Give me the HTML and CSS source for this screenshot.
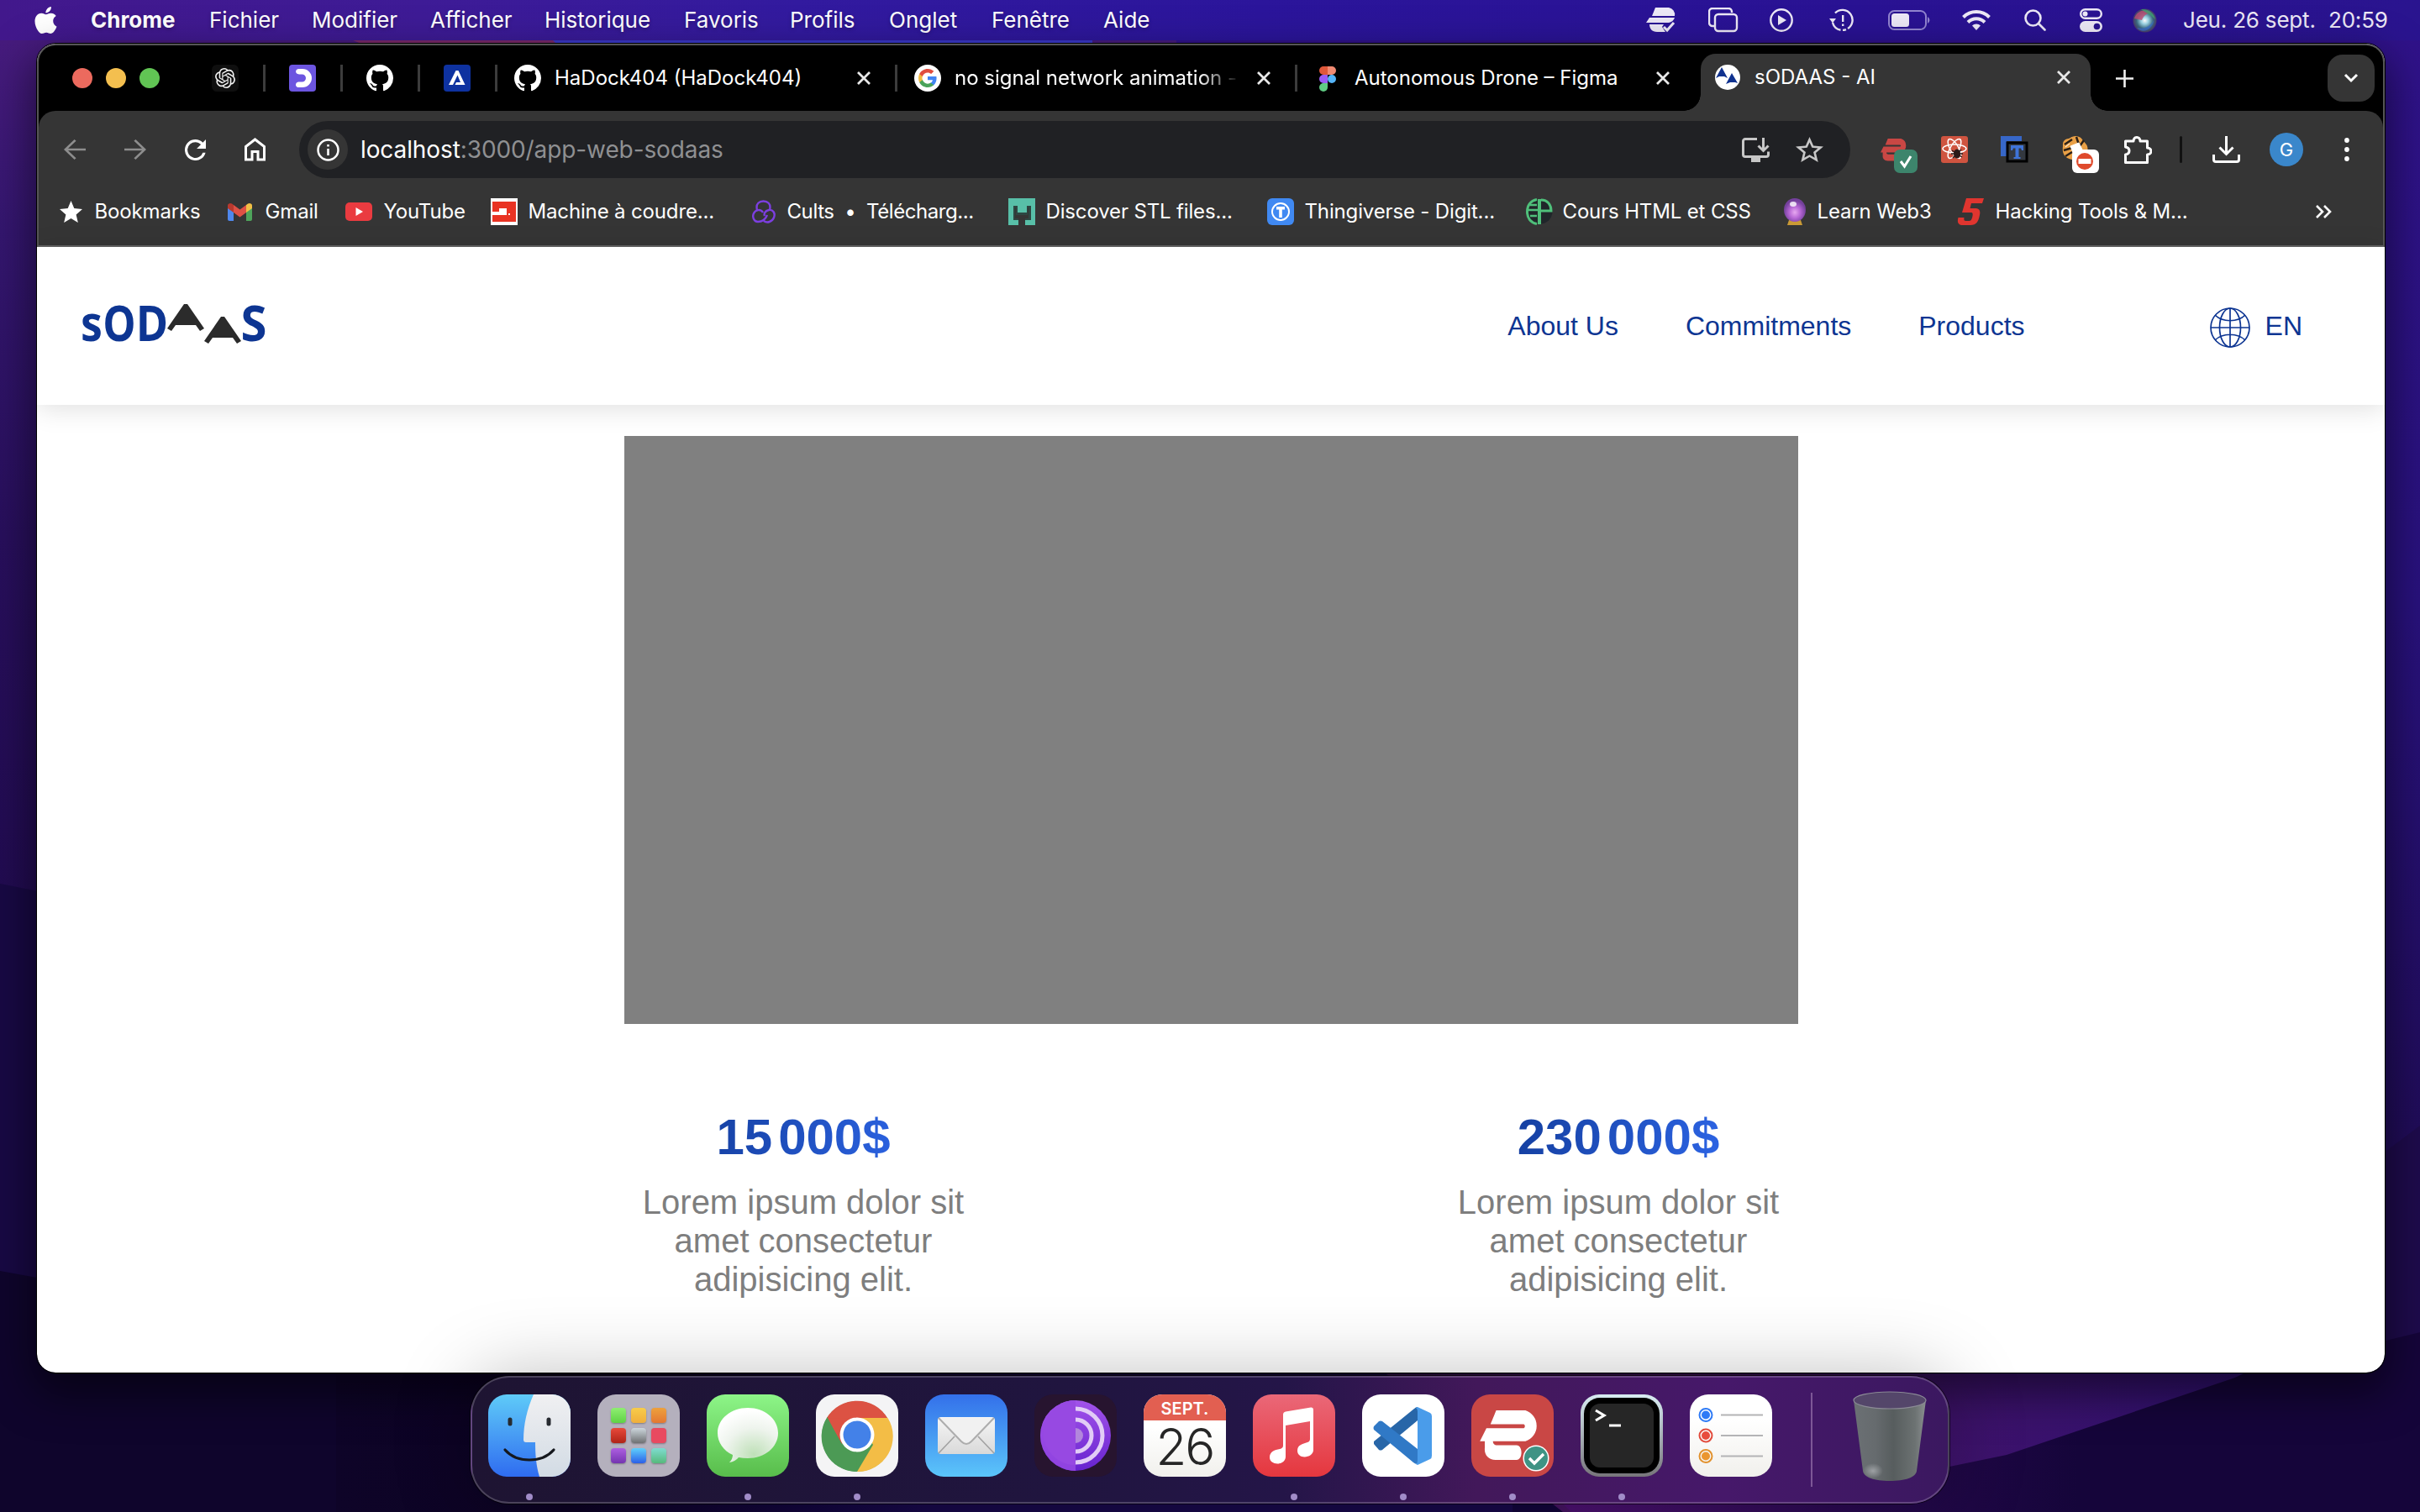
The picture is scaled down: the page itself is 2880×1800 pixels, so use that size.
FILE: index.html
```html
<!DOCTYPE html>
<html lang="fr">
<head>
<meta charset="utf-8">
<title>sODAAS - AI</title>
<link rel="stylesheet" href="styles.css">
</head>
<body>
<svg class="sprite" width="0" height="0" aria-hidden="true">
  <defs>
    <symbol id="github" viewBox="0 0 16 16"><path fill="#fff" d="M8 0C3.58 0 0 3.58 0 8c0 3.54 2.29 6.53 5.47 7.59.4.07.55-.17.55-.38 0-.19-.01-.82-.01-1.49-2.01.37-2.53-.49-2.69-.94-.09-.23-.48-.94-.82-1.13-.28-.15-.68-.52-.01-.53.63-.01 1.08.58 1.23.82.72 1.21 1.87.87 2.33.66.07-.52.28-.87.51-1.07-1.78-.2-3.64-.89-3.64-3.95 0-.87.31-1.59.82-2.15-.08-.2-.36-1.02.08-2.12 0 0 .67-.21 2.2.82.64-.18 1.32-.27 2-.27s1.36.09 2 .27c1.53-1.04 2.2-.82 2.2-.82.44 1.1.16 1.92.08 2.12.51.56.82 1.27.82 2.15 0 3.07-1.87 3.75-3.65 3.95.29.25.54.73.54 1.48 0 1.07-.01 1.93-.01 2.2 0 .21.15.46.55.38A8.01 8.01 0 0016 8c0-4.42-3.58-8-8-8z"/></symbol>
    <symbol id="close" viewBox="0 0 18 18"><path d="M2 2l14 14M16 2L2 16" stroke="#e8e8e8" stroke-width="2.8"/></symbol>
    <symbol id="vpn" viewBox="0 0 76 62"><path d="M20 0h36a20 20 0 0 1 0 38H0l8-16h46a3 3 0 0 0 0-5H13zM6 38h10c0 3 2 5 5 5h24c8 0 8 18 0 18H20C10 61 5 54 6 46z"/></symbol>
  </defs>
</svg>

<svg class="wallpaper" viewBox="0 0 2880 1800" preserveAspectRatio="none" aria-hidden="true">
  <defs>
    <linearGradient id="w1" x1="0" y1="0" x2="0" y2="1"><stop offset="0" stop-color="#4a1c80"/><stop offset=".25" stop-color="#34166f"/><stop offset=".58" stop-color="#280f5c"/><stop offset="1" stop-color="#210b50"/></linearGradient>
    <linearGradient id="w2" x1="0" y1="0" x2="0" y2="1"><stop offset="0" stop-color="#30128a"/><stop offset=".45" stop-color="#28117c"/><stop offset=".85" stop-color="#200c58"/></linearGradient>
    <linearGradient id="w3" x1="0" y1="0" x2="1" y2="0"><stop offset="0" stop-color="#0e0428"/><stop offset=".2" stop-color="#0c0322"/><stop offset=".4" stop-color="#12053c"/><stop offset=".5" stop-color="#170848"/></linearGradient>
    <linearGradient id="w4" x1="0" y1="0" x2="1" y2="0"><stop offset="0" stop-color="#3a1256"/><stop offset=".35" stop-color="#4c1568"/><stop offset="1" stop-color="#2e1070"/></linearGradient>
    <linearGradient id="w5" x1="0" y1="0" x2="1" y2="0"><stop offset="0" stop-color="#4c1170"/><stop offset=".35" stop-color="#27094e"/><stop offset=".6" stop-color="#15053a"/><stop offset="1" stop-color="#15053a"/></linearGradient>
  </defs>
  <rect width="2880" height="1800" fill="#12053a"/>
  <rect width="1440" height="1100" fill="url(#w1)"/>
  <rect x="1400" width="1480" height="1600" fill="url(#w2)"/>
  <path d="M400 40H700V60H450z" fill="#78286a"/><path d="M650 40H1300V60H670z" fill="#3a38c8"/>
  <path d="M0 1052L60 1064V1540H0z" fill="#180944"/>
  <path d="M2820 1385L2880 1340V1600H2820z" fill="#1e0b4c"/>
  <path d="M0 1513L60 1524L580 1600V1800H0z" fill="#0f052c"/>
  <path d="M400 1620H1800V1800H400z" fill="url(#w3)"/>
  <path d="M1630 1620H2700L2390 1775L2200 1800H1860z" fill="url(#w4)"/>
  <path d="M1860 1790L2320 1746L2388 1732L2660 1640L2880 1586V1800H1870z" fill="url(#w5)"/>
</svg>

<header class="menubar">
  <nav class="menus">
    <svg width="27" height="32" viewBox="2 0 20 24"><path fill="#fff" d="M12.152 6.896c-.948 0-2.415-1.078-3.96-1.04-2.04.027-3.91 1.183-4.961 3.014-2.117 3.675-.546 9.103 1.519 12.09 1.013 1.454 2.208 3.09 3.792 3.039 1.52-.065 2.09-.987 3.935-.987 1.831 0 2.35.987 3.96.948 1.637-.026 2.676-1.48 3.676-2.948 1.156-1.688 1.636-3.325 1.662-3.415-.039-.013-3.182-1.221-3.22-4.857-.026-3.04 2.48-4.494 2.597-4.559-1.429-2.09-3.623-2.324-4.39-2.376-2-.156-3.675 1.09-4.61 1.09zM15.53 3.83c.843-1.012 1.4-2.427 1.245-3.83-1.207.052-2.662.805-3.532 1.818-.78.896-1.454 2.338-1.273 3.714 1.338.104 2.715-.688 3.559-1.701"/></svg>
    <span class="t app">Chrome</span><span class="t">Fichier</span><span class="t">Modifier</span><span class="t">Afficher</span><span class="t">Historique</span><span class="t">Favoris</span><span class="t">Profils</span><span class="t">Onglet</span><span class="t">Fenêtre</span><span class="t">Aide</span>
  </nav>
  <div class="status">
    <svg width="36" height="30" viewBox="0 0 36 30"><g fill="#ece8f6"><path d="M11 0h16a8.500 8.500 0 0 1 7 10H7zM4 12h30a9 9 0 0 1-7 6H0zM4 20h17l-2 3 4 6H13C7 29 4 25 4 20z"/></g><path d="M21 23l4 4 8-9" fill="none" stroke="#ece8f6" stroke-width="3"/></svg>
    <svg width="36" height="30" viewBox="0 0 36 30" fill="none" stroke="#ece8f6" stroke-width="2.400"><path d="M7 22H5a4 4 0 0 1-4-4V5a4 4 0 0 1 4-4h19a4 4 0 0 1 4 4v1"/><rect x="8" y="8" width="26" height="20" rx="4"/></svg>
    <svg width="28" height="28" viewBox="0 0 28 28"><circle cx="14" cy="14" r="12.700" fill="none" stroke="#ece8f6" stroke-width="2.400"/><path d="M10 8l10 6-10 6z" fill="#ece8f6"/></svg>
    <svg width="29" height="28" viewBox="0 0 29 28"><path d="M7 5.500A12 12 0 1 1 4 17" fill="none" stroke="#ece8f6" stroke-width="2.400" stroke-dasharray="40 2.500 4 2.500"/><path d="M0 12h8l-4 5.500zM15 8h2.400v8H15zM15 18.500h2.400V21H15z" fill="#ece8f6"/></svg>
    <svg width="50" height="24" viewBox="0 0 50 24"><rect x="1" y="1" width="44" height="22" rx="6.500" fill="none" stroke="#9184cf" stroke-width="2"/><rect x="4" y="4" width="21" height="16" rx="3.500" fill="#ece8f6"/><path d="M47 8v8a4.500 4.500 0 0 0 0-8z" fill="#9184cf"/></svg>
    <svg width="34" height="24" viewBox="0 0 34 24" fill="none" stroke="#ece8f6" stroke-width="4"><path d="M1.500 8.500a22 22 0 0 1 31 0M7 14.500a14 14 0 0 1 20 0"/><path d="M17 24l-5-5.500a7 7 0 0 1 10 0z" fill="#ece8f6" stroke="none"/></svg>
    <svg width="26" height="26" viewBox="0 0 26 26" fill="none" stroke="#ece8f6" stroke-width="2.600" stroke-linecap="round"><circle cx="10.500" cy="10.500" r="9"/><path d="M17 17l7.500 7.500"/></svg>
    <svg width="27" height="28" viewBox="0 0 27 28"><rect x="1.200" y="1.200" width="24.600" height="10.600" rx="5.300" fill="none" stroke="#ece8f6" stroke-width="2.400"/><circle cx="6.500" cy="6.500" r="3" fill="#ece8f6"/><rect y="15" width="27" height="13" rx="6.500" fill="#ece8f6"/><circle cx="20.500" cy="21.500" r="3.800" fill="#28138f"/></svg>
    <svg width="29" height="29" viewBox="0 0 29 29"><defs><radialGradient id="siri"><stop offset="0" stop-color="#fff"/><stop offset=".3" stop-color="#9fd8e8"/><stop offset=".7" stop-color="#3c6a80"/><stop offset="1" stop-color="#4a3a6a"/></radialGradient></defs><circle cx="14.500" cy="14.500" r="14" fill="url(#siri)"/><path d="M2 12C5 3 14 0 22 5c-6 1-9 4-11 9z" fill="#c04a70" opacity=".8"/><path d="M10 1c9-1 16 5 17 12-5-5-10-7-17-12z" fill="#3fa070" opacity=".8"/><path d="M5 23c8 2 16-1 20-9 0 9-12 18-20 9z" fill="#3a70d0" opacity=".7"/></svg>
    <span class="t">Jeu. 26 sept.</span><span class="t">20:59</span>
  </div>
</header>

<main class="window">
  <div class="chrome">
    <div class="tabstrip">
      <div class="lights"><i class="red"></i><i class="amber"></i><i class="green"></i></div>
      <div class="pin"><svg width="32" height="32" viewBox="0 0 32 32"><rect width="32" height="32" rx="6" fill="#0f0f0f"/><g transform="translate(4 4)"><path fill="#f2f2f2" d="M22.2819 9.8211a5.9847 5.9847 0 0 0-.5157-4.9108 6.0462 6.0462 0 0 0-6.5098-2.9A6.0651 6.0651 0 0 0 4.9807 4.1818a5.9847 5.9847 0 0 0-3.9977 2.9 6.0462 6.0462 0 0 0 .7427 7.0966 5.98 5.98 0 0 0 .511 4.9107 6.051 6.051 0 0 0 6.5146 2.9001A5.9847 5.9847 0 0 0 13.2599 24a6.0557 6.0557 0 0 0 5.7718-4.2058 5.9894 5.9894 0 0 0 3.9977-2.9001 6.0557 6.0557 0 0 0-.7475-7.073zm-9.022 12.6081a4.4755 4.4755 0 0 1-2.8764-1.0408l.1419-.0804 4.7783-2.7582a.7948.7948 0 0 0 .3927-.6813v-6.7369l2.02 1.1686a.071.071 0 0 1 .038.052v5.5826a4.504 4.504 0 0 1-4.4945 4.4944zm-9.6607-4.1254a4.4708 4.4708 0 0 1-.5346-3.0137l.142.0852 4.783 2.7582a.7712.7712 0 0 0 .7806 0l5.8428-3.3685v2.3324a.0804.0804 0 0 1-.0332.0615L9.74 19.9502a4.4992 4.4992 0 0 1-6.1408-1.6464zM2.3408 7.8956a4.485 4.485 0 0 1 2.3655-1.9728V11.6a.7664.7664 0 0 0 .3879.6765l5.8144 3.3543-2.0201 1.1685a.0757.0757 0 0 1-.071 0l-4.8303-2.7865A4.504 4.504 0 0 1 2.3408 7.872zm16.5963 3.8558L13.1038 8.364 15.1192 7.2a.0757.0757 0 0 1 .071 0l4.8303 2.7913a4.4944 4.4944 0 0 1-.6765 8.1042v-5.6772a.79.79 0 0 0-.407-.667zm2.0107-3.0231l-.142-.0852-4.7735-2.7818a.7759.7759 0 0 0-.7854 0L9.409 9.2297V6.8974a.0662.0662 0 0 1 .0284-.0615l4.8303-2.7866a4.4992 4.4992 0 0 1 6.6802 4.66zM8.3065 12.863l-2.02-1.1638a.0804.0804 0 0 1-.038-.0567V6.0742a4.4992 4.4992 0 0 1 7.3757-3.4537l-.142.0805L8.704 5.459a.7948.7948 0 0 0-.3927.6813zm1.0976-2.3654l2.602-1.4998 2.6069 1.4998v2.9994l-2.5974 1.4997-2.6067-1.4997Z"/></g></svg></div>
      <div class="pin"><svg width="32" height="32" viewBox="0 0 32 32"><rect width="32" height="32" rx="4" fill="#6c55e0"/><path d="M11 5h5a11 11 0 0 1 0 22h-5c-4 0-4-6 0-6.500h4.500a4.500 4.500 0 0 0 0-9H12C7 11 7 6 11 5z" fill="#fff"/></svg></div>
      <div class="pin"><svg width="32" height="32"><use href="#github"/></svg></div>
      <div class="pin"><svg width="32" height="32" viewBox="0 0 32 32"><rect width="32" height="32" rx="4" fill="#0e32a0"/><path d="M14.500 7h3l8 17H13.500l1.500-3h5l-3.500-8.500L11 24H6z" fill="#fff"/></svg></div>
      <div class="tab tab-a"><svg width="32" height="32"><use href="#github"/></svg><span class="t">HaDock404 (HaDock404)</span><svg class="x" width="18" height="18"><use href="#close"/></svg></div>
      <div class="tab tab-b"><svg width="32" height="32" viewBox="0 0 32 32"><circle cx="16" cy="16" r="16" fill="#fff"/><g transform="translate(4 4)"><path fill="#4285f4" d="M22.560 12.250c0-.78-.07-1.530-.2-2.250H12v4.260h5.920c-.26 1.370-1.040 2.530-2.210 3.310v2.770h3.570c2.080-1.920 3.280-4.740 3.280-8.090z"/><path fill="#4aa35a" d="M12 23c2.970 0 5.460-.98 7.280-2.660l-3.570-2.770c-.98.66-2.230 1.060-3.710 1.060-2.860 0-5.290-1.930-6.160-4.530H2.180v2.840C3.990 20.530 7.700 23 12 23z"/><path fill="#f2bb42" d="M5.840 14.090c-.22-.66-.35-1.360-.35-2.090s.13-1.430.35-2.090V7.070H2.180C1.430 8.550 1 10.220 1 12s.43 3.450 1.180 4.930l2.850-2.220.81-.62z"/><path fill="#e04e3f" d="M12 5.380c1.620 0 3.060.56 4.210 1.640l3.150-3.150C17.450 2.090 14.970 1 12 1 7.700 1 3.990 3.470 2.180 7.070l3.660 2.840c.87-2.600 3.300-4.530 6.160-4.530z"/></g></svg><span class="t fade">no signal network animation -</span><svg class="x" width="18" height="18"><use href="#close"/></svg></div>
      <div class="tab tab-c"><svg width="32" height="32" viewBox="0 0 32 32"><path d="M16 2h-5a5 5 0 0 0 0 10h5z" fill="#e0583a"/><path d="M16 2h5a5 5 0 0 1 0 10h-5z" fill="#f08a72"/><path d="M16 12h-5a5 5 0 0 0 0 10h5z" fill="#9a5cf5"/><circle cx="21" cy="17" r="5" fill="#55b4f8"/><path d="M16 22h-5a5 5 0 1 0 5 5z" fill="#5fcb83"/></svg><span class="t">Autonomous Drone – Figma</span><svg class="x" width="18" height="18"><use href="#close"/></svg></div>
      <div class="tab active"><svg width="30" height="30" viewBox="0 0 30 30"><circle cx="15" cy="15" r="15" fill="#fff"/><path d="M8 3l7 13-4-2H5l-4 2zM20 10l7 12-3-1h-6l-5 2z" fill="#10328f"/></svg><span class="t">sODAAS - AI</span><svg class="x" width="18" height="18"><use href="#close"/></svg></div>
      <svg class="plus" width="21" height="21" viewBox="0 0 21 21"><path d="M10.500 0v21M0 10.500h21" stroke="#f1f1f1" stroke-width="2.600"/></svg>
      <div class="tabsearch"><svg width="18" height="12" viewBox="0 0 18 12"><path d="M2 2l7 7 7-7" fill="none" stroke="#fff" stroke-width="3"/></svg></div>
    </div>

    <div class="toolbar">
      <svg width="26" height="24" viewBox="3 3 18 18" preserveAspectRatio="none"><path fill="#8d8d8d" d="M21 11.100H6.500l6.600-6.700L11.700 3 3 12l8.700 9 1.400-1.400-6.600-6.700H21z"/></svg>
      <svg width="26" height="24" viewBox="3 3 18 18" preserveAspectRatio="none"><path fill="#8d8d8d" d="M3 11.100h14.500l-6.600-6.700L12.300 3 21 12l-8.700 9-1.400-1.400 6.600-6.700H3z"/></svg>
      <svg width="25" height="25" viewBox="4 4 16 16"><path fill="#fff" d="M17.650 6.350A7.950 7.950 0 0 0 12 4a8 8 0 1 0 7.730 10h-2.080A6 6 0 1 1 12 6c1.660 0 3.140.69 4.220 1.780L13 11h7V4l-2.350 2.350z"/></svg>
      <svg width="25" height="28" viewBox="0 0 25 28"><path d="M1.500 26V10.500l11-8.500 11 8.500V26H16v-9.500H9V26z" fill="none" stroke="#fff" stroke-width="3"/></svg>
      <div class="omnibox">
        <span class="info"><svg width="27" height="27" viewBox="0 0 27 27"><circle cx="13.500" cy="13.500" r="12" fill="none" stroke="#fff" stroke-width="2.500"/><path d="M12.200 12h2.600v8h-2.600zM12.200 7h2.600v2.600h-2.600z" fill="#fff"/></svg></span>
        <span class="t url"><b>localhost</b>:3000/app-web-sodaas</span>
        <svg class="install" width="33" height="29" viewBox="0 0 33 29"><path d="M18 1.500H4A2.500 2.500 0 0 0 1.500 4v16A2.500 2.500 0 0 0 4 22.500h25a2.500 2.500 0 0 0 2.500-2.500v-3.500M25.500 0v15M19.500 9.500l6 6 6-6" fill="none" stroke="#c7c7c7" stroke-width="3"/><path d="M11 23h11v6H11z" fill="#c7c7c7"/></svg>
        <svg width="33" height="30" viewBox="2 2 20 19" preserveAspectRatio="none"><path fill="#c7c7c7" d="M22 9.240l-7.190-.62L12 2 9.190 8.630 2 9.240l5.460 4.730L5.820 21 12 17.270 18.180 21l-1.630-7.030L22 9.240zM12 15.400l-3.760 2.270 1-4.280-3.320-2.880 4.380-.38L12 6.100l1.710 4.040 4.380.38-3.320 2.880 1 4.280L12 15.400z"/></svg>
      </div>
      <div class="ext">
        <svg width="44" height="44" viewBox="0 0 44 44"><use href="#vpn" x="0" y="3" width="33" height="27" fill="#c94744"/><rect x="16" y="16" width="28" height="28" rx="7" fill="#3d856c"/><path d="M24 30l4.500 6L36 24" fill="none" stroke="#fff" stroke-width="3"/></svg>
        <svg width="32" height="32" viewBox="0 0 32 32"><rect width="32" height="32" rx="3" fill="#cf5440"/><g fill="none" stroke="#fff" stroke-width="1.500"><ellipse cx="16" cy="15" rx="14" ry="5"/><ellipse cx="16" cy="15" rx="13" ry="5" transform="rotate(60 16 15)"/><ellipse cx="16" cy="15" rx="13" ry="5" transform="rotate(120 16 15)"/></g><ellipse cx="19" cy="21" rx="4" ry="5.500" fill="#2a1a18"/><path d="M13 17l12 8M14 26l10-10M12 21h14" stroke="#2a1a18" stroke-width="1.500"/></svg>
        <svg width="33" height="32" viewBox="0 0 33 32"><path d="M0 0h25v6H7v18H0z" fill="#3767c8"/><rect x="8" y="8" width="23" height="22" fill="#33383f" stroke="#000" stroke-width="3"/><path d="M12 11h15v6h-2l-1-2.500h-2.500V25h2v2h-8v-2h2V14.500H15L14 17h-2z" fill="#3f74d8"/></svg>
        <svg width="44" height="44" viewBox="0 0 44 44"><path d="M1 12C0 2 8 4 10 2s10-4 14 2 8 6 6 16L12 28C2 26 0 20 1 12z" fill="#e9a046"/><path d="M3 10l9-6M2 17l10-3M4 24l8-5M17 1l3 9M26 5l-5 7" stroke="#2a2018" stroke-width="2.500"/><path d="M10 12l10-4 4 8-10 6zM4 13l5-4" fill="#fff" stroke="#fff"/><rect x="12" y="16" width="32" height="28" rx="6" fill="#fff"/><circle cx="27" cy="30" r="10" fill="#df4a2c"/><path d="M19.500 27h15v6h-15z" fill="#fff"/></svg>
        <svg width="33" height="33" viewBox="0 0 33 33"><path d="M1.500 6H11c0-6 8-6 8 0h8.500v8c6 0 6 8 0 8v9.500h-26V22c6-1 6-8 0-9z" fill="none" stroke="#fff" stroke-width="3" stroke-linejoin="round"/></svg>
        <i class="rule"></i>
        <svg width="33" height="32" viewBox="0 0 33 32"><path d="M16.500 0v21M8.500 13.500l8 8 8-8M1.500 22v6a2.500 2.500 0 0 0 2.500 2.500h25a2.500 2.500 0 0 0 2.500-2.500v-6" fill="none" stroke="#fff" stroke-width="3"/></svg>
        <span class="avatar">G</span>
        <svg width="6" height="28" viewBox="0 0 6 28" fill="#fff"><circle cx="3" cy="3" r="2.900"/><circle cx="3" cy="14" r="2.900"/><circle cx="3" cy="25" r="2.900"/></svg>
      </div>
    </div>

    <div class="bookmarks">
      <svg width="27" height="26" viewBox="2 2 20 19" preserveAspectRatio="none"><path fill="#fff" d="M12 17.270L18.180 21l-1.640-7.030L22 9.240l-7.190-.61L12 2 9.190 8.630 2 9.240l5.460 4.730L5.820 21z"/></svg><span class="t">Bookmarks</span>
      <svg width="29" height="22" viewBox="0 0 29 22"><path d="M0 3.500V20a2 2 0 0 0 2 2h5V9z" fill="#4f87ec"/><path d="M29 3.500V20a2 2 0 0 1-2 2h-5V9z" fill="#4ea45b"/><path d="M22 3l2-1.500c2-1.500 5 0 5 2V7l-7 5z" fill="#f2bf45"/><path d="M0 7V3.500c0-2 3-3.500 5-2L7 3v9z" fill="#b8392e"/><path d="M7 3l7.500 5.500L22 3v9l-7.500 5.500L7 12z" fill="#de5145"/></svg><span class="t">Gmail</span>
      <svg width="32" height="22" viewBox="0 0 32 22"><rect width="32" height="22" rx="5" fill="#ea3b40"/><path d="M12.500 6l8.500 5-8.500 5z" fill="#fff"/></svg><span class="t">YouTube</span>
      <svg width="32" height="32" viewBox="0 0 32 32"><path fill="#fff" d="M0 0h32v32H0z"/><path d="M2 4h28v24H2v-8h17v-8H10v4H2z" fill="#e93323"/><path d="M21 18h2v2h-2z" fill="#fff"/></svg><span class="t">Machine à coudre...</span>
      <svg width="29" height="28" viewBox="0 0 29 28" fill="none" stroke="#7c3fe0" stroke-width="2.400"><path d="M7 12C5 4 10 1.500 14.500 1.500S24 4 22 12M14 15c-3-5-9-3-11 1s0 10 5 10 9-3 11-8M15 25c4 3 10 1 12-4s-1-10-6-9-6 5-5 7"/></svg><span class="t tight">Cults &nbsp;•&nbsp; Télécharg...</span>
      <svg width="32" height="32" viewBox="0 0 32 32"><path d="M0 0h32v32H20v-6h7V9h-5v8H11V9H6v17h6v6H0z" fill="#58bfa8"/><path d="M6 9h5v8h11V9h5v17h-7v-2h4V11h-1v9H9v-9H8v13h4v2H6z" fill="#2e4642"/></svg><span class="t">Discover STL files...</span>
      <svg width="32" height="32" viewBox="0 0 32 32"><rect width="32" height="32" rx="6" fill="#4089f2"/><circle cx="16" cy="16" r="10" fill="none" stroke="#fff" stroke-width="2"/><path d="M11 10h10v3.500h-3.200V23h-3.600v-9.500H11z" fill="#fff"/></svg><span class="t">Thingiverse - Digit...</span>
      <svg width="32" height="32" viewBox="0 0 32 32"><circle cx="17" cy="16" r="14.500" fill="#20262a"/><path d="M13 1.500C5 3 1.500 9 1.500 16S5 29 13 30.500" fill="none" stroke="#4fbf7a" stroke-width="3"/><path d="M2 14h13M5 8h8M5 21h8" stroke="#4fbf7a" stroke-width="2.500"/><path d="M16 1v30" stroke="#4fbf7a" stroke-width="4"/><path d="M18 2c8 0 12 6 12 13H18" fill="none" stroke="#4fbf7a" stroke-width="3"/></svg><span class="t">Cours HTML et CSS</span>
      <svg width="28" height="32" viewBox="0 0 28 32"><defs><radialGradient id="ball" cx=".5" cy=".6"><stop offset="0" stop-color="#e7a8f0"/><stop offset=".5" stop-color="#b868d6"/><stop offset="1" stop-color="#74409c"/></radialGradient></defs><path d="M7 26h14l2 6H5z" fill="#c99a35"/><ellipse cx="14" cy="14" rx="13" ry="14" fill="url(#ball)"/><ellipse cx="12" cy="7" rx="4" ry="3" fill="#fff" opacity=".8"/></svg><span class="t">Learn Web3</span>
      <svg width="32" height="32" viewBox="0 0 32 32"><path d="M11 0h21l-2 6H17l-1.500 6H21c6 0 7 3 6 8-1.500 8-4 12-11 12H7c-6 0-7-4-5.500-9h7c-.5 3 0 4 2 4h3c3 0 4-1 5-6 .5-3 0-4-2-4H6z" fill="#e0352f"/></svg><span class="t">Hacking Tools &amp; M...</span>
      <svg class="more" width="21" height="18" viewBox="0 0 21 18"><path d="M2 2l7 7-7 7M11 2l7 7-7 7" fill="none" stroke="#fff" stroke-width="2.600"/></svg>
    </div>
  </div>

  <section class="page">
    <header class="site-header">
      <svg class="logo" width="226" height="96" viewBox="-2 -16 226 96" role="img" aria-label="sODAAS">
        <g font-family="Noto Sans, sans-serif" font-weight="700" font-size="59" fill="#0d3592">
          <text x="-2" y="50" textLength="26" lengthAdjust="spacingAndGlyphs">s</text>
          <text x="24.500" y="50" textLength="39" lengthAdjust="spacingAndGlyphs">O</text>
          <text x="64" y="50" textLength="38" lengthAdjust="spacingAndGlyphs">D</text>
          <text x="188.500" y="50" textLength="31" lengthAdjust="spacingAndGlyphs">S</text>
        </g>
        <path id="wing" d="M121 6h4l20 29-5 3-5-7h-24l-5 7-5-3z" fill="#2b2b2b"/>
        <use href="#wing" x="44" y="15"/>
      </svg>
      <nav class="links"><a class="t">About Us</a><a class="t">Commitments</a><a class="t">Products</a></nav>
      <div class="lang"><svg width="48" height="48" viewBox="0 0 48 48" fill="none" stroke="#0d3592" stroke-width="1.700"><circle cx="24" cy="24" r="23"/><ellipse cx="24" cy="24" rx="12.500" ry="23"/><path d="M24 1v46M1 24h46M6 9c9 9 27 9 36 0M6 39c9-9 27-9 36 0"/></svg><span class="t">EN</span></div>
    </header>
    <div class="content">
      <div class="media"></div>
      <div class="stats">
        <article><h2 class="t">15<i></i>000$</h2><p>Lorem ipsum dolor sit amet consectetur adipisicing elit.</p></article>
        <article><h2 class="t">230<i></i>000$</h2><p>Lorem ipsum dolor sit amet consectetur adipisicing elit.</p></article>
      </div>
    </div>
  </section>
</main>

<footer class="dock">
  <div class="slot on"><svg viewBox="0 0 98 98"><defs><linearGradient id="fb" x2="0" y2="1"><stop stop-color="#5fcbf8"/><stop offset="1" stop-color="#2f6cf0"/></linearGradient><linearGradient id="fw" x2="0" y2="1"><stop stop-color="#f0f0f2"/><stop offset="1" stop-color="#d2dbe4"/></linearGradient><clipPath id="sq"><rect width="98" height="98" rx="22"/></clipPath></defs><g clip-path="url(#sq)"><path fill="url(#fb)" d="M0 0h98v98H0z"/><path d="M54 0C46 18 42 36 42 54q0 3 3 3h11c0 14 1 28 5 41h37V0z" fill="url(#fw)"/></g><path d="M26 30v5M72 30v5" stroke="#262a30" stroke-width="5" stroke-linecap="round"/><path d="M20 66c14 16 44 16 58 0" fill="none" stroke="#15181d" stroke-width="3.200" stroke-linecap="round"/></svg></div>
  <div class="slot launchpad"><div class="pad"><i></i><i></i><i></i><i></i><i></i><i></i><i></i><i></i><i></i></div></div>
  <div class="slot on"><svg viewBox="0 0 98 98"><defs><linearGradient id="mg" x2="0" y2="1"><stop stop-color="#8df588"/><stop offset="1" stop-color="#58bd4b"/></linearGradient><radialGradient id="mb" cx=".6" cy=".85" r=".8"><stop stop-color="#bfe0b8"/><stop offset=".6" stop-color="#eef4ed"/><stop offset="1" stop-color="#fff"/></radialGradient></defs><rect width="98" height="98" rx="22" fill="url(#mg)"/><path d="M49 16c20 0 36 13 36 30S69 76 49 76q-6 0-11-1-4 5-11 6 4-4 4-9C20 67 13 57 13 46c0-17 16-30 36-30z" fill="url(#mb)"/></svg></div>
  <div class="slot on"><svg viewBox="0 0 98 98"><rect width="98" height="98" rx="22" fill="#f4f4f5"/><circle cx="49" cy="50" r="42" fill="#4c9a55"/><path d="M49 49L13 28a42 42 0 0 1 72 0z" fill="#dc5243"/><path d="M49 28h36.500A42 42 0 0 1 49 92l19-32z" fill="#f3bd46"/><path d="M13 28l18 31 18-30z" fill="#dc5243"/><path d="M13.500 27L31 60l18 11-1 21A42 42 0 0 1 13.500 27z" fill="#4c9a55"/><path d="M67 58L49 91V68z" fill="#4c9a55"/><circle cx="49" cy="48" r="20.500" fill="#fff"/><circle cx="49" cy="48" r="16.500" fill="#4381e8"/></svg></div>
  <div class="slot"><svg viewBox="0 0 98 98"><defs><linearGradient id="ml" x2="0" y2="1"><stop stop-color="#3370ea"/><stop offset="1" stop-color="#5bc5fa"/></linearGradient><linearGradient id="en" x2="0" y2="1"><stop stop-color="#f6f6f6"/><stop offset="1" stop-color="#d9d9d9"/></linearGradient></defs><rect width="98" height="98" rx="22" fill="url(#ml)"/><rect x="15" y="27" width="68" height="44" rx="4" fill="url(#en)"/><path d="M16 70l19-20M82 70L63 50" stroke="#a2a2a2" stroke-width="1.600"/><path d="M16 28l27 28q6 6 12 0l27-28" fill="#f1f1f1" stroke="#adadad" stroke-width="2"/></svg></div>
  <div class="slot"><svg viewBox="0 0 98 98"><defs><linearGradient id="to" x2="0" y2="1"><stop stop-color="#a253ea"/><stop offset="1" stop-color="#6723cf"/></linearGradient></defs><rect width="98" height="98" rx="22" fill="#27142f"/><circle cx="49" cy="49" r="42" fill="url(#to)"/><path d="M49 7v77a38 38 0 0 1 0-77z" fill="#8d42dc"/><path d="M49 7a42 42 0 0 0 0 84z" fill="#9a4be4" opacity=".8"/><g fill="none" stroke="#e2cdf6" stroke-width="5"><path d="M49 17a32 32 0 0 1 0 64" /><path d="M49 30a19 19 0 0 1 0 38"/></g><path d="M49 40a9 9 0 0 1 0 18z" fill="#b287dc"/></svg></div>
  <div class="slot cal"><b class="t">SEPT.</b><span>26</span></div>
  <div class="slot on"><svg viewBox="0 0 98 98"><defs><linearGradient id="mu" x2="0" y2="1"><stop stop-color="#ea6878"/><stop offset="1" stop-color="#e5373e"/></linearGradient></defs><rect width="98" height="98" rx="22" fill="url(#mu)"/><path d="M36 24q0-3 3-3.500l30-5q3-.5 3 2.500v48c0 10-19 12-19 1 0-7 6-8 12-10q3-1 3-4V32l-29 5v37c0 11-19 11-19 1 0-7 6-9 12-10q4-1 4-4z" fill="#fff"/></svg></div>
  <div class="slot on"><svg viewBox="0 0 98 98"><rect width="98" height="98" rx="22" fill="#fff"/><path d="M14 59l6 7q2 1 4 0L66 31V15q-2 0-4 2L14 56z" fill="#2866a8"/><path d="M14 38l6-6q2-1 4 0l42 33v18q-3 0-5-2L14 42q-1-2 0-4z" fill="#3079c6"/><path d="M66 15l15 7q2 1 2 4v47q0 3-2 4l-15 7-2-1q2-1 2-4V20q0-3-2-4z" fill="#4a9cea"/></svg></div>
  <div class="slot on"><svg viewBox="0 0 98 98"><rect width="98" height="98" rx="22" fill="#c94745"/><use href="#vpn" x="10" y="19" width="74" height="60" fill="#fff"/><circle cx="77" cy="76" r="15.500" fill="#fff"/><circle cx="77" cy="76" r="14" fill="#3f9384"/><path d="M69 76l6 6 11-11" fill="none" stroke="#fff" stroke-width="3.400"/></svg></div>
  <div class="slot on"><svg viewBox="0 0 98 98"><defs><linearGradient id="te" x2="0" y2="1"><stop stop-color="#d8ecf2"/><stop offset="1" stop-color="#77757a"/></linearGradient></defs><rect width="98" height="98" rx="22" fill="url(#te)"/><rect x="4" y="4" width="90" height="90" rx="19" fill="#000"/><rect x="11" y="11" width="76" height="76" rx="12" fill="#262626"/><path d="M18 19l10 6-10 6" fill="none" stroke="#fff" stroke-width="3.200"/><path d="M34 37h14" stroke="#fff" stroke-width="3"/></svg></div>
  <div class="slot"><svg viewBox="0 0 98 98"><defs><linearGradient id="re" x2="0" y2="1"><stop offset=".3" stop-color="#fff"/><stop offset="1" stop-color="#f1f0ec"/></linearGradient></defs><rect width="98" height="98" rx="22" fill="url(#re)"/><g stroke="#b4b4b6" stroke-width="1.800"><path d="M37 24.500h50M37 49h50M37 73.500h50"/></g><g fill="none" stroke-width="2"><circle cx="19" cy="24.500" r="7.500" stroke="#2f7bf6"/><circle cx="19" cy="49" r="7.500" stroke="#e24a3b"/><circle cx="19" cy="73.500" r="7.500" stroke="#e2922e"/></g><circle cx="19" cy="24.500" r="5" fill="#2f7bf6"/><circle cx="19" cy="49" r="5" fill="#e84c3d"/><circle cx="19" cy="73.500" r="5" fill="#ea962f"/></svg></div>
  <i class="divider"></i>
  <svg class="trash" width="88" height="108" viewBox="0 0 88 108"><defs><linearGradient id="tr"><stop stop-color="#6b7074"/><stop offset=".3" stop-color="#666b6e"/><stop offset=".55" stop-color="#575d5e"/><stop offset=".85" stop-color="#6c7272"/><stop offset="1" stop-color="#8a8f90"/></linearGradient><radialGradient id="gl"><stop stop-color="#b5b8bb" stop-opacity=".7"/><stop offset="1" stop-color="#b5b8bb" stop-opacity="0"/></radialGradient></defs><path d="M1 11l11 84c1 8 14 12 32 12s31-4 32-12l11-84z" fill="url(#tr)"/><ellipse cx="44" cy="11" rx="43" ry="10" fill="#54466a" stroke="#8b8a96" stroke-width="1.200"/><ellipse cx="24" cy="95" rx="12" ry="9" fill="url(#gl)"/></svg>
</footer>
</body>
</html>
```
FILE: styles.css
```css
* { box-sizing: border-box; }

body {
  margin: 0;
  width: 2880px;
  height: 1800px;
  overflow: hidden;
  position: relative;
  font-family: Inter, "Liberation Sans", sans-serif;
  color: #fff;
  background: #12053a;
  display: flex;
  flex-direction: column;
  align-items: center;
}

svg { display: block; flex: none; }

.sprite { position: absolute; }
.wallpaper { position: absolute; inset: 0; width: 2880px; height: 1800px; z-index: -1; }

.t { white-space: nowrap; }

/* macOS menu bar */
.menubar {
  width: 100%;
  height: 48px;
  flex: none;
  display: flex;
  justify-content: space-between;
  font-size: 26px;
  line-height: 46px;
  background: linear-gradient(90deg, #42188c 0, #3e1b96 500px, #321a9f 950px, #2b159b 1500px, #291293 2200px, #2a148f);
}
.menus {
  display: grid;
  align-items: center;
  padding-left: 41px;
  grid-template-columns: 67px 141px 122px 141px 136px 166px 126px 118px 122px 133px 60px;
  text-shadow: 0 2px 4px rgba(0, 0, 0, .25);
}
.menus .app { font-weight: 700; }
.status {
  display: grid;
  align-items: center;
  width: 921px;
  grid-template-columns: 74px 73px 71px 70px 88px 74px 66px 63px 60px 173px 70px;
  letter-spacing: -.2px;
  color: #ece8f6;
}

/* browser window */
.window {
  width: 2794px;
  height: 1582px;
  flex: none;
  margin: 4px 0 0 2px;
  border-radius: 22px;
  overflow: hidden;
  display: flex;
  flex-direction: column;
  background: #fff;
  outline: 1px solid #000;
  box-shadow: 0 20px 50px 6px rgba(0, 0, 0, .5);
}
.chrome {
  height: 242px;
  flex: none;
  display: flex;
  flex-direction: column;
  background: #000;
  border: 2px solid #555;
  border-bottom-color: #636363;
  border-radius: 22px 22px 0 0;
}

.tabstrip {
  height: 78px;
  flex: none;
  display: flex;
  align-items: center;
  padding-left: 40px;
  font-size: 24px;
}
.lights { display: flex; gap: 16px; width: 166px; }
.lights i { width: 24px; height: 24px; border-radius: 50%; }
.red { background: #ec6a5e; }
.amber { background: #f4bf4f; }
.green { background: #61c554; }
.pin { width: 92px; height: 32px; display: flex; justify-content: space-between; }
.pin::after { content: ""; width: 3px; height: 32px; background: #3c3c3c; margin-right: 28px; }
.tab { display: flex; align-items: center; height: 32px; }
.tab .t { flex: 1; margin-left: 16px; overflow: hidden; line-height: 34px; }
.tab-a, .tab-b, .tab-c { border-right: 3px solid #3c3c3c; padding-right: 28px; }
.tab-a { width: 456px; margin-left: -8px; }
.tab-b { width: 456px; margin-left: 20px; }
.tab-c { width: 452px; margin-left: 20px; border-right: 0; }
.fade { -webkit-mask-image: linear-gradient(90deg, #000 290px, transparent 340px); mask-image: linear-gradient(90deg, #000 290px, transparent 340px); margin-right: 20px; }
.active {
  position: relative;
  width: 464px;
  height: 68px;
  align-self: flex-end;
  margin-left: 8px;
  padding: 0 23px 13px 17px;
  border-radius: 18px 18px 0 0;
  background: #353535;
}
.active .t { margin-left: 17px; }
.active::before, .active::after {
  content: "";
  position: absolute;
  bottom: 0;
  width: 20px;
  height: 20px;
}
.active::before { left: -20px; background: radial-gradient(circle at 0 0, transparent 19.500px, #353535 20px); }
.active::after { right: -20px; background: radial-gradient(circle at 100% 0, transparent 19.500px, #353535 20px); }
.plus { margin-left: 30px; }
.tabsearch {
  width: 56px;
  height: 56px;
  margin-left: auto;
  margin-right: 10px;
  border-radius: 18px;
  background: #353535;
  display: grid;
  place-items: center;
}

.toolbar {
  height: 92px;
  flex: none;
  display: grid;
  grid-template-columns: 72px 72px 71px 65px 1846px 1fr;
  align-items: center;
  padding-left: 30px;
  background: #353535;
  border-radius: 20px 20px 0 0;
}
.omnibox {
  height: 68px;
  border-radius: 34px;
  background: #202124;
  display: flex;
  align-items: center;
  padding: 0 32px 0 10px;
}
.info { width: 48px; height: 48px; border-radius: 50%; background: #353535; display: grid; place-items: center; }
.url { font-size: 28px; letter-spacing: -.1px; margin-left: 15px; color: #8f9092; line-height: 68px; }
.url b { font-weight: 400; color: #fff; }
.install { margin-left: auto; margin-right: 31px; }
.ext { display: grid; grid-template-columns: 72px 71px 73px 74px 66px 39px 68px 89px 20px; align-items: center; padding-left: 36px; }
.ext svg:nth-child(1), .ext svg:nth-child(4) { margin-top: 12px; }
.rule { width: 3px; height: 32px; background: #111; border-radius: 2px; }
.avatar { width: 40px; height: 40px; border-radius: 50%; background: #3a87cb; font-size: 22px; line-height: 40px; text-align: center; }

.bookmarks {
  flex: 1;
  display: grid;
  grid-template-columns: 40px 160px 43px 97px 44px 129px 43px 267px 41px 265px 43px 265px 43px 265px 42px 264px 39px 168px 44px 382px 30px;
  align-items: center;
  padding: 0 0 12px 25px;
  font-size: 24px;
  line-height: 32px;
  letter-spacing: -.15px;
  background: #353535;
}
.bookmarks .t { margin-left: 1.500px; }
.bookmarks .tight { letter-spacing: -.42px; }

/* web page */
.page { flex: 1; display: flex; flex-direction: column; font-family: "Liberation Sans", Arial, sans-serif; }
.site-header {
  height: 188px;
  flex: none;
  display: flex;
  align-items: center;
  padding: 0 98px 0 52px;
  font-size: 32px;
  color: #0d3592;
  box-shadow: 0 4px 30px rgba(0, 0, 0, .13);
}
.links { margin-left: auto; display: flex; gap: 80px; }
.lang { margin-left: 220px; display: flex; align-items: center; gap: 18px; }
.lang svg { margin-top: 4px; }
.content { width: 50%; margin: 37px auto 0; }
.media { height: 700px; background: #808080; }
.stats { display: flex; justify-content: space-between; }
.stats article { width: 427px; margin-top: 100px; text-align: center; }
.stats h2 {
  margin: 0;
  font-size: 60px;
  line-height: 69px;
  background: linear-gradient(100deg, #0c3288, #3571fc);
  -webkit-background-clip: text;
  background-clip: text;
  color: transparent;
}
.stats h2 i { display: inline-block; width: 7px; }
.stats p { margin: 20px 10px 0; font-size: 40px; line-height: 46px; color: #7e7e7e; }

/* dock */
.dock {
  position: relative;
  width: 1760px;
  height: 152px;
  flex: none;
  margin-top: 4px;
  padding: 0 20px 0 19px;
  display: flex;
  gap: 32px;
  align-items: flex-start;
  border: 2px solid rgba(255, 255, 255, .2);
  border-radius: 46px;
  background: linear-gradient(90deg, #1e1432, #20153f 40%, #241548 55%, #42185a 68%, #46186a 85%, #3b1860);
  box-shadow: 0 0 0 1px rgba(0, 0, 0, .6), 0 0 90px rgba(0, 0, 0, .26);
}
.slot { position: relative; width: 98px; height: 98px; margin-top: 20px; flex: none; border-radius: 22px; }
.slot svg { width: 98px; height: 98px; }
.on::after { content: ""; position: absolute; left: 45px; top: 118px; width: 8px; height: 8px; border-radius: 50%; background: #a18cc8; }
.launchpad { background: #b4b0bd; padding: 16px; }
.pad { display: grid; grid-template-columns: repeat(3, 18px); gap: 6px; }
.pad i { height: 18px; border-radius: 4px; box-shadow: 0 1px 2px rgba(0, 0, 0, .3); }
.pad i:nth-child(1) { background: linear-gradient(#8fee72, #5fd245); }
.pad i:nth-child(2) { background: linear-gradient(#f7cc4a, #f0ae3b); }
.pad i:nth-child(3) { background: linear-gradient(#eda13d, #e37833); }
.pad i:nth-child(4) { background: linear-gradient(#e8493a, #b02418); }
.pad i:nth-child(5) { background: linear-gradient(#ccd6dc, #6f7173); }
.pad i:nth-child(6) { background: #e84a60; }
.pad i:nth-child(7) { background: linear-gradient(#ad5fe0, #7434b0); }
.pad i:nth-child(8) { background: linear-gradient(#5fd0fb, #2b5fe8); }
.pad i:nth-child(9) { background: linear-gradient(#7fdcd0, #56b97c); }
.cal { overflow: hidden; display: flex; flex-direction: column; align-items: center; background: linear-gradient(#fff 40%, #f1f0ec); }
.cal b { width: 100%; height: 31px; line-height: 34px; text-align: center; font-size: 20px; font-weight: 600; background: #e25f51; }
.cal span { font-size: 60px; font-weight: 300; line-height: 62px; letter-spacing: -2px; color: #262626; }
.divider { flex: none; width: 2px; height: 112px; margin: 18px 16px 0 14px; background: #7d5796; }
.trash { margin-top: 16px; }
```
